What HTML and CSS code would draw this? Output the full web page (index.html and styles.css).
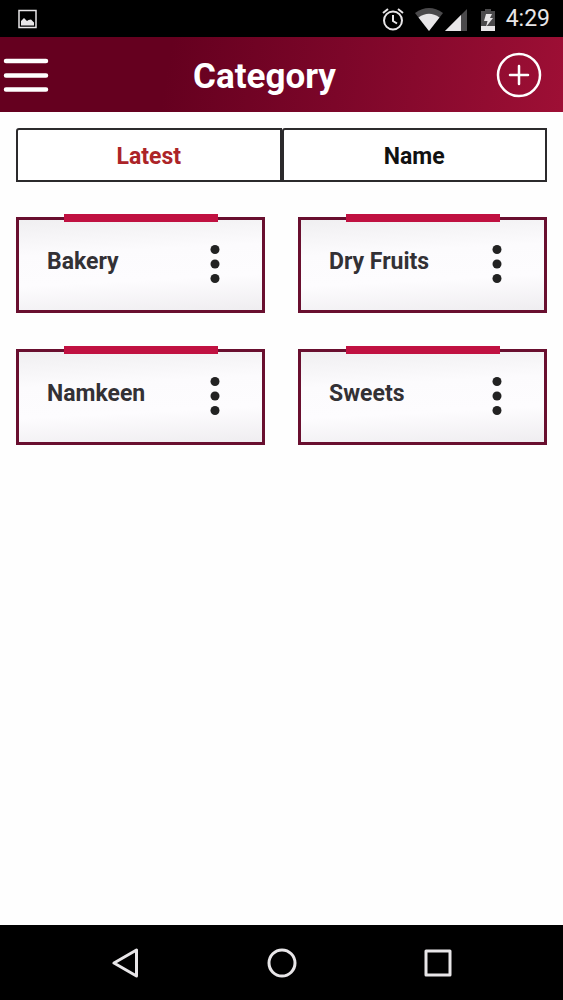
FILE: index.html
```
<!DOCTYPE html>
<html lang="en">
<head>
  <meta charset="UTF-8">
  <title>Category</title>
  <meta name="viewport" content="width=device-width, initial-scale=1.0">
  <link rel="stylesheet" href="styles.css">
</head>
<body>

  <div class="status-bar">
    <svg class="status-picture" width="20" height="20" viewBox="0 0 20 20">
      <rect x="1" y="1.500" width="17" height="17" fill="none" stroke="#e8e6e8" stroke-width="1.500"/>
      <path d="M3 16.500V12l3-3 3 3 1.500-1 2.500-.5 3 3v3z" fill="#e8e6e8"/>
    </svg>
    <div class="status-icons">
      <svg width="22" height="24" viewBox="0 0 22 24" fill="none" stroke="#e8e6e8" stroke-width="2">
        <circle cx="11" cy="13.500" r="9"/>
        <path d="M1 6l5-4M21 6l-5-4M11 8v6l4 2.500"/>
      </svg>
      <svg class="wifi" width="28" height="24" viewBox="0 0 28 24">
        <path d="M14 24L0 6Q14-4 28 6z" fill="#4b4a4c"/>
        <path d="M14 24L3.500 10.500Q14 3 24.500 10.500z" fill="#e8e6e8"/>
      </svg>
      <svg class="signal" width="22" height="24" viewBox="0 0 22 24">
        <path d="M0 24L22 2v22z" fill="#4b4a4c"/>
        <path d="M0 24L16 8v16z" fill="#e8e6e8"/>
      </svg>
      <svg class="battery" width="16" height="24" viewBox="0 0 16 24">
        <path d="M5 2h6v2h4v20H1V4h4z" fill="#4b4a4c"/>
        <path d="M1 19h14v5H1z" fill="#e8e6e8"/>
        <path d="M6 7h6l-2 4h3l-7 9 1.500-6H4z" fill="#e8e6e8"/>
      </svg>
      <span class="time">4:29</span>
    </div>
  </div>

  <header>
    <button class="icon-btn" aria-label="Menu">
      <svg width="46" height="36" viewBox="0 0 46 36" stroke="#fff" stroke-width="4.500" stroke-linecap="round">
        <path d="M3 4h40M3 18.500h40M3 32.500h40"/>
      </svg>
    </button>
    <h1>Category</h1>
    <button class="icon-btn" aria-label="Add category">
      <svg width="46" height="46" viewBox="0 0 46 46" fill="none" stroke="#fff" stroke-width="2.500" stroke-linecap="round">
        <circle cx="23" cy="23" r="21"/>
        <path d="M23 14v18M14 23h18"/>
      </svg>
    </button>
  </header>

  <main>
    <div class="tabs">
      <button class="tab active">Latest</button>
      <button class="tab">Name</button>
    </div>

    <div class="cards">
      <div class="card">
        <h2>Bakery</h2>
        <button class="more" aria-label="Bakery options">
          <svg width="10" height="40" viewBox="0 0 10 40" fill="#222"><circle cx="5" cy="5.500" r="4.500"/><circle cx="5" cy="20" r="4.500"/><circle cx="5" cy="34.500" r="4.500"/></svg>
        </button>
      </div>
      <div class="card">
        <h2>Dry Fruits</h2>
        <button class="more" aria-label="Dry Fruits options">
          <svg width="10" height="40" viewBox="0 0 10 40" fill="#222"><circle cx="5" cy="5.500" r="4.500"/><circle cx="5" cy="20" r="4.500"/><circle cx="5" cy="34.500" r="4.500"/></svg>
        </button>
      </div>
      <div class="card">
        <h2>Namkeen</h2>
        <button class="more" aria-label="Namkeen options">
          <svg width="10" height="40" viewBox="0 0 10 40" fill="#222"><circle cx="5" cy="5.500" r="4.500"/><circle cx="5" cy="20" r="4.500"/><circle cx="5" cy="34.500" r="4.500"/></svg>
        </button>
      </div>
      <div class="card">
        <h2>Sweets</h2>
        <button class="more" aria-label="Sweets options">
          <svg width="10" height="40" viewBox="0 0 10 40" fill="#222"><circle cx="5" cy="5.500" r="4.500"/><circle cx="5" cy="20" r="4.500"/><circle cx="5" cy="34.500" r="4.500"/></svg>
        </button>
      </div>
    </div>
  </main>

  <nav>
    <button class="icon-btn" aria-label="Back">
      <svg width="30" height="30" viewBox="0 0 30 30"><path d="M3 15L25.500 2v26z"/></svg>
    </button>
    <button class="icon-btn" aria-label="Home">
      <svg width="30" height="30" viewBox="0 0 30 30"><circle cx="15" cy="15" r="13"/></svg>
    </button>
    <button class="icon-btn" aria-label="Recent apps">
      <svg width="30" height="30" viewBox="0 0 30 30"><rect x="3" y="3" width="24" height="24"/></svg>
    </button>
  </nav>

</body>
</html>
```
FILE: styles.css
```
* {
  box-sizing: border-box;
}
body {
  margin: 0;
  min-height: 100vh;
  display: flex;
  flex-direction: column;
  font-family: Roboto, sans-serif;
  background: #fefefe;
}
button {
  font-family: inherit;
  cursor: pointer;
}
svg {
  display: block;
}
h1, h2 {
  margin: 0;
  font-weight: 700;
}
.status-bar {
  display: flex;
  align-items: center;
  justify-content: space-between;
  height: 37px;
  padding: 0 13px 0 18px;
  background: #000;
}
.status-icons {
  display: flex;
  align-items: center;
}
.wifi {
  margin-left: 11px;
}
.signal {
  margin-left: 2px;
}
.battery {
  margin-left: 13px;
}
.time {
  margin-left: 10px;
  padding-top: 1px;
  font-size: 23px;
  line-height: 36px;
  color: #e8e6e8;
}
header {
  display: flex;
  align-items: center;
  justify-content: space-between;
  height: 75px;
  padding: 0 21px 0 3px;
  background: linear-gradient(100deg, #65001f 30%, #7c0629 60%, #9e0f35);
}
header h1 {
  flex: 1;
  padding: 5px 16px 0 0;
  font-size: 35px;
  line-height: 44px;
  text-align: center;
  color: #fff;
}
.icon-btn {
  padding: 0;
  border: none;
  background: none;
}
main {
  flex: 1;
  padding: 16px;
}
.tabs {
  display: flex;
}
.tab {
  flex: 1;
  height: 54px;
  padding: 2px 0 0;
  border: 2px solid #2b2a2c;
  border-radius: 3px 0 0 0;
  background: #fff;
  font-size: 23px;
  font-weight: 700;
  color: #111;
}
.tab.active {
  color: #ac2428;
}
.cards {
  display: grid;
  grid-template-columns: 1fr 1fr;
  gap: 36px 33px;
  margin-top: 35px;
}
.card {
  position: relative;
  display: flex;
  align-items: center;
  justify-content: space-between;
  height: 96px;
  padding: 0 42px 6px 28px;
  border: 3px solid #690f2f;
  background: linear-gradient(177deg, #f0eff1, #fcfbfd 35%, #fdfcfe 65%, #efedf0);
}
/* red strip over the top border */
.card::before {
  content: "";
  position: absolute;
  top: -6px;
  left: 45px;
  right: 44px;
  height: 8px;
  background: #c01141;
}
.card h2 {
  font-size: 23px;
  line-height: 28px;
  color: #333135;
}
.more {
  padding: 4px 0 0;
  border: none;
  background: none;
}
nav {
  display: flex;
  align-items: center;
  justify-content: center;
  gap: 126px;
  height: 75px;
  background: #000;
}
nav svg {
  fill: none;
  stroke: #e8e6e8;
  stroke-width: 3;
  stroke-linejoin: round;
}
```
